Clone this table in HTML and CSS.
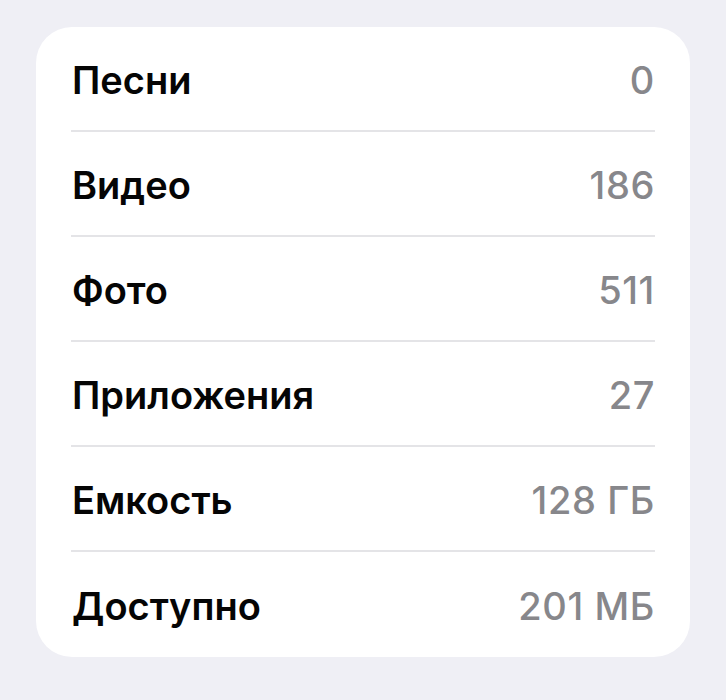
FILE: index.html
```html
<!DOCTYPE html>
<html lang="ru">
<head>
<meta charset="utf-8">
<link rel="stylesheet" href="styles.css">
</head>
<body>
<div class="card">
  <div class="row"><span class="label">Песни</span><span class="value">0</span></div>
  <div class="row"><span class="label">Видео</span><span class="value">186</span></div>
  <div class="row"><span class="label">Фото</span><span class="value">511</span></div>
  <div class="row"><span class="label">Приложения</span><span class="value">27</span></div>
  <div class="row"><span class="label">Емкость</span><span class="value">128 ГБ</span></div>
  <div class="row"><span class="label">Доступно</span><span class="value">201 МБ</span></div>
</div>
</body>
</html>
```
FILE: styles.css
```css
html, body {
  margin: 0;
  padding: 0;
}
body {
  background: #efeff5;
  width: 726px;
  height: 700px;
  font-family: Inter, "Liberation Sans", Arial, sans-serif;
}
.card {
  margin: 27px 0 0 36px;
  width: 654px;
  height: 630px;
  background: #ffffff;
  border-radius: 36px;
  padding: 0 35px 0 35px;
  box-sizing: border-box;
  display: flex;
  flex-direction: column;
}
.row {
  height: 105px;
  display: flex;
  align-items: center;
  justify-content: space-between;
  border-bottom: 2px solid #e4e4e7;
  box-sizing: border-box;
  padding-top: 2px;
}
.row:last-child {
  border-bottom: none;
}
.label {
  font-size: 38px;
  font-weight: 600;
  color: #050505;
  padding-left: 1px;
}
.value {
  font-size: 38px;
  font-weight: 550;
  letter-spacing: 0.6px;
  color: #87878b;
}
```
